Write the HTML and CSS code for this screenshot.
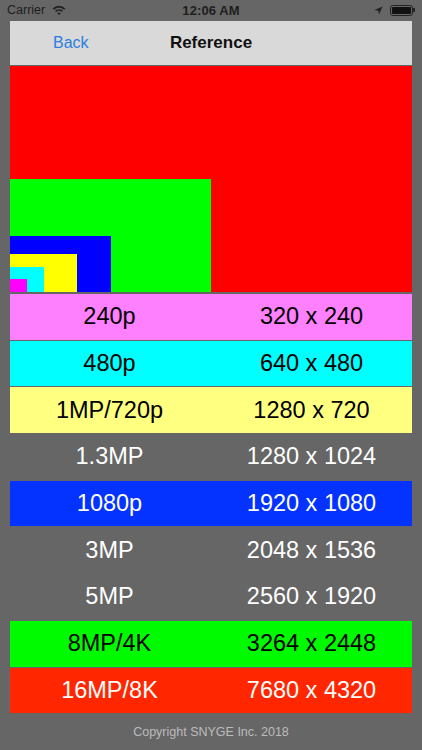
FILE: index.html
```html
<!DOCTYPE html>
<html>
<head>
<meta charset="utf-8">
<link rel="stylesheet" href="styles.css">
</head>
<body>
<div class="status">
  <div class="status-left">
    <span>Carrier</span>
    <svg class="wifi" width="14" height="10" viewBox="0 0 14 10">
      <path d="M0.6 3.4 A9.2 9.2 0 0 1 13.4 3.4 L12.1 4.8 A7.3 7.3 0 0 0 1.9 4.8 Z" fill="#222"/>
      <path d="M2.9 5.8 A6 6 0 0 1 11.1 5.8 L9.8 7.1 A4.2 4.2 0 0 0 4.2 7.1 Z" fill="#222"/>
      <path d="M5.2 8.2 A2.7 2.7 0 0 1 8.8 8.2 L7 10 Z" fill="#222"/>
    </svg>
  </div>
  <div class="status-time">12:06 AM</div>
  <div class="status-right">
    <svg class="loc" width="9" height="9" viewBox="0 0 9 9">
      <path d="M8.6 0.4 L0.4 4 L4.2 4.8 L5 8.6 Z" fill="#222"/>
    </svg>
    <div class="battery"><div class="battery-fill"></div></div>
    <div class="battery-nub"></div>
  </div>
</div>

<div class="screen">
  <div class="nav">
    <span class="back">Back</span>
    <span class="title">Reference</span>
  </div>

  <div class="picture">
    <div class="box r8k">
      <div class="box r4k">
        <div class="box r1080">
          <div class="box r720">
            <div class="box r480">
              <div class="box r240"></div>
            </div>
          </div>
        </div>
      </div>
    </div>
  </div>

  <div class="rows">
    <div class="row pink"><span>240p</span><span>320 x 240</span></div>
    <div class="row cyan"><span>480p</span><span>640 x 480</span></div>
    <div class="row yellow"><span>1MP/720p</span><span>1280 x 720</span></div>
    <div class="row plain"><span>1.3MP</span><span>1280 x 1024</span></div>
    <div class="row blue"><span>1080p</span><span>1920 x 1080</span></div>
    <div class="row plain"><span>3MP</span><span>2048 x 1536</span></div>
    <div class="row plain"><span>5MP</span><span>2560 x 1920</span></div>
    <div class="row green"><span>8MP/4K</span><span>3264 x 2448</span></div>
    <div class="row red"><span>16MP/8K</span><span>7680 x 4320</span></div>
  </div>

  <div class="footer">Copyright SNYGE Inc. 2018</div>
</div>
</body>
</html>
```

FILE: styles.css
```css
* { box-sizing: border-box; }

html, body {
  margin: 0;
  padding: 0;
  background: #666666;
  font-family: "Liberation Sans", Arial, sans-serif;
  width: 422px;
  height: 750px;
  overflow: hidden;
}

.status {
  height: 21px;
  display: flex;
  align-items: center;
  justify-content: space-between;
  padding: 0 7px 1px 7px;
  color: #1e1e1e;
  font-size: 12.5px;
}

.status-left {
  display: flex;
  align-items: center;
  gap: 7px;
  width: 120px;
}

.status-time {
  font-size: 13px;
  font-weight: 700;
  letter-spacing: 0.1px;
}

.status-right {
  display: flex;
  align-items: center;
  justify-content: flex-end;
  width: 120px;
}

.loc { margin-right: 7px; }

.battery {
  width: 23px;
  height: 11px;
  border: 1px solid #222;
  border-radius: 3px;
  padding: 1px;
}

.battery-fill {
  width: 100%;
  height: 100%;
  background: #111;
  border-radius: 1px;
}

.battery-nub {
  width: 2px;
  height: 4px;
  background: #222;
  border-radius: 0 1px 1px 0;
}

.screen {
  margin: 0 10px;
}

.nav {
  height: 44px;
  background: #d9d9d9;
  display: grid;
  grid-template-columns: 1fr auto 1fr;
  align-items: center;
}

.back {
  color: #2a7fe0;
  font-size: 16px;
  padding-left: 43px;
}

.title {
  font-size: 17px;
  font-weight: 700;
  color: #111;
}

.picture {
  margin-top: 1px;
  height: 226px;
}

.box {
  display: flex;
  align-items: flex-end;
}

.r8k { width: 100%; height: 100%; background: #ff0000; }
.r4k { width: 50%; height: 50%; background: #00ff00; }
.r1080 { width: 50%; height: 50%; background: #0000ff; }
.r720 { width: 66.667%; height: 66.667%; background: #ffff00; }
.r480 { width: 50%; height: 66.667%; background: #00ffff; }
.r240 { width: 50%; height: 50%; background: #ff00ff; }

.rows {
  margin-top: 2px;
  display: flex;
  flex-direction: column;
  gap: 1px;
}

.row {
  height: 45.7px;
  display: grid;
  grid-template-columns: 1fr 1fr;
  align-items: center;
  text-align: center;
  font-size: 23.5px;
  color: #000;
}

.row span:first-child { padding-right: 2px; }

.pink { background: #ff80ff; }
.cyan { background: #00ffff; }
.yellow { background: #ffff80; }
.plain { background: transparent; color: #fff; }
.blue { background: #0433ff; color: #fff; }
.green { background: #00fa00; }
.red { background: #ff2600; color: #fff; }

.footer {
  text-align: center;
  color: #bcbcbc;
  font-size: 12.5px;
  margin-top: 12px;
}
```
